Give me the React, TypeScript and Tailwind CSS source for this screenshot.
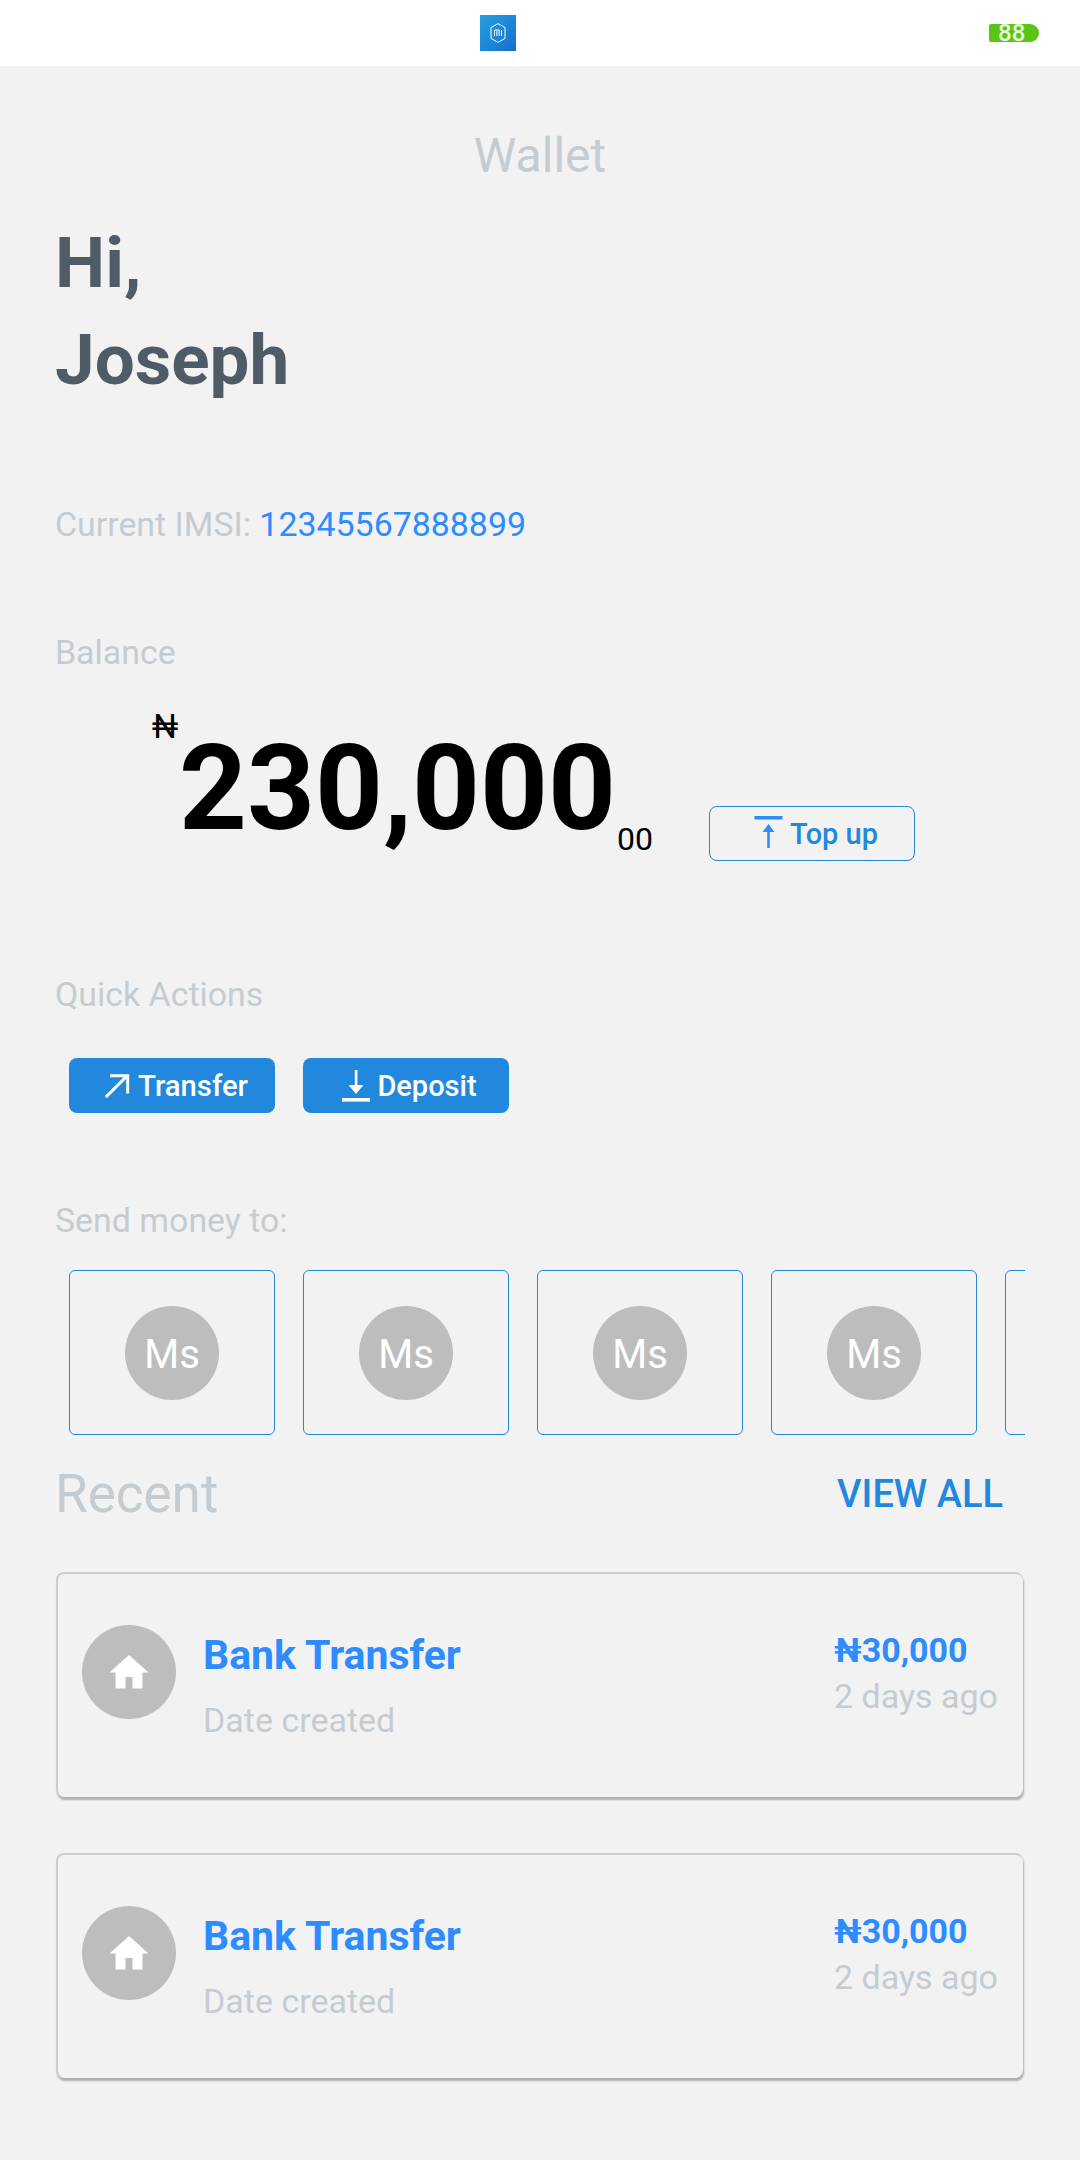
import React from "react";

const font = { fontFamily: "Roboto, sans-serif" };

function Contact() {
  return (
    <div className="w-[206px] h-[165px] shrink-0 rounded-[6px] border border-[#2288dd] flex items-center justify-center">
      <div className="w-[94px] h-[94px] rounded-full bg-[#bdbdbd] flex items-center justify-center text-white text-[40px] pt-[4px]">Ms</div>
    </div>
  );
}

function HomeIcon() {
  return (
    <svg width="40" height="34" viewBox="0 0 40 34">
      <path d="M20 0 L39.5 17.5 L33.5 17.5 L33.5 33.5 L23.5 33.5 L23.5 22 L16.5 22 L16.5 33.5 L6.5 33.5 L6.5 17.5 L0.5 17.5 Z" fill="#fff" />
    </svg>
  );
}

function RecentCard() {
  return (
    <div className="h-[225px] rounded-[8px] bg-[#f2f2f2] border-t-2 border-l-2 border-[#cccccc] shadow-[1px_3px_2px_rgba(0,0,0,0.28)] flex pl-[24px] pr-[25px] pt-[51px] -ml-[1px]">
      <div className="w-[94px] h-[94px] rounded-full bg-[#bdbdbd] flex items-center justify-center shrink-0">
        <HomeIcon />
      </div>
      <div className="ml-[27px] flex-1">
        <div className="text-[41px] leading-[47px] font-bold text-[#2d8cff] mt-[7px]">Bank Transfer</div>
        <div className="text-[34px] leading-[39px] text-[#c5ccd1] mt-[22px]">Date created</div>
      </div>
      <div>
        <div className="text-[34px] leading-[39px] font-bold text-[#2d8cff] mt-[6px]">₦30,000</div>
        <div className="text-[34px] leading-[39px] text-[#c5ccd1] mt-[7px]">2 days ago</div>
      </div>
    </div>
  );
}

export default function App() {
  return (
    <div className="w-[1080px] h-[2160px] bg-[#f2f2f2] overflow-hidden" style={font}>
      <div className="h-[66px] bg-white flex items-center relative">
        <div className="absolute left-[480px] top-[15px] w-[36px] h-[36px] bg-gradient-to-br from-[#26a0e0] to-[#1670d0] flex items-center justify-center">
          <svg width="16" height="20" viewBox="0 0 16 20" fill="none" stroke="#fff" strokeWidth="1">
            <path d="M8 .6 15 4.6V15.4L8 19.4 1 15.4V4.6Z" />
            <path d="M4.5 13V7H9.2V13M6.9 7.5V13M11.5 7V13" />
          </svg>
        </div>
        <div className="absolute left-[989px] top-[24px] w-[50px] h-[18px] bg-[#58c614] rounded-r-[9px] rounded-l-[2px] text-[#e8f8dc] text-[24px] leading-[18px] font-medium pl-[9px]">88</div>
      </div>

      <div className="px-[55px]">
        <div className="text-center text-[48px] leading-[56px] text-[#c5ccd1] mt-[62px]">Wallet</div>
        <div className="text-[71px] leading-[97px] font-bold text-[#4f5b67] mt-[30px]">Hi,<br />Joseph</div>

        <div className="text-[33.9px] leading-[39px] text-[#c5ccd1] mt-[97px]">
          Current IMSI: <span className="text-[#2d8cff]">12345567888899</span>
        </div>

        <div className="text-[33.9px] leading-[39px] text-[#c5ccd1] mt-[89px]">Balance</div>

        <div className="flex h-[201px] mt-[10px] relative">
          <div className="absolute left-[97px] top-[25px] text-[33px] leading-[39px] text-black">₦</div>
          <div className="absolute left-[124px] top-[35px] text-[118.5px] leading-[143px] font-bold text-black">230,000</div>
          <div className="absolute left-[562px] top-[138px] text-[32px] leading-[38px] text-black">00</div>
          <div className="absolute left-[654px] top-[124px] w-[206px] h-[55px] rounded-[8px] border border-[#2288dd] flex items-center justify-center gap-[7px] pl-[8px] pt-[2px] text-[#2288dd] text-[29px] font-medium">
            <svg width="29" height="34" viewBox="0 0 28 34" className="-mt-[4px]">
              <rect x="0" y="0" width="28" height="3.5" fill="#2d8cff" />
              <path d="M14 8 L20 16 H15.3 V32 H12.7 V16 H8 Z" fill="#2d8cff" />
            </svg>
            Top up
          </div>
        </div>

        <div className="text-[33.9px] leading-[39px] text-[#c5ccd1] mt-[92px]">Quick Actions</div>

        <div className="flex gap-[28px] ml-[14px] mt-[44px]">
          <div className="w-[206px] h-[55px] rounded-[8px] bg-[#2288dd] flex items-center justify-center gap-[8px] pl-[8px] pt-[3px] text-white text-[29.3px] font-medium">
            <svg width="26" height="26" viewBox="0 0 28 28" fill="none" stroke="#fff" strokeWidth="3.2" className="-mt-[3px]">
              <path d="M2 26 L25 3 M6.5 3 H25.5 V22" />
            </svg>
            Transfer
          </div>
          <div className="w-[206px] h-[55px] rounded-[8px] bg-[#2288dd] flex items-center justify-center gap-[7px] pl-[7px] pt-[3px] text-white text-[29px] font-medium">
            <svg width="28" height="32" viewBox="0 0 28 32" fill="#fff" className="-mt-[3px]">
              <rect x="0" y="28" width="28" height="3.6" />
              <rect x="12.8" y="0" width="2.6" height="20" />
              <path d="M6.5 15 H21.5 L14 24 Z" />
            </svg>
            Deposit
          </div>
        </div>

        <div className="text-[33.9px] leading-[39px] text-[#c5ccd1] mt-[88px]">Send money to:</div>

        <div className="flex gap-[28px] pl-[14px] mt-[30px] overflow-hidden w-[970px]">
          <Contact />
          <Contact />
          <Contact />
          <Contact />
          <Contact />
        </div>

        <div className="flex justify-between items-center mt-[31px] pr-[22px]">
          <div className="text-[53px] leading-[56px] text-[#c5ccd1]">Recent</div>
          <div className="text-[38px] leading-[45px] font-medium text-[#2288dd]">VIEW ALL</div>
        </div>

        <div className="flex flex-col gap-[56px] mt-[50px] ml-[2px] mr-[2px]">
          <RecentCard />
          <RecentCard />
        </div>
      </div>
    </div>
  );
}
